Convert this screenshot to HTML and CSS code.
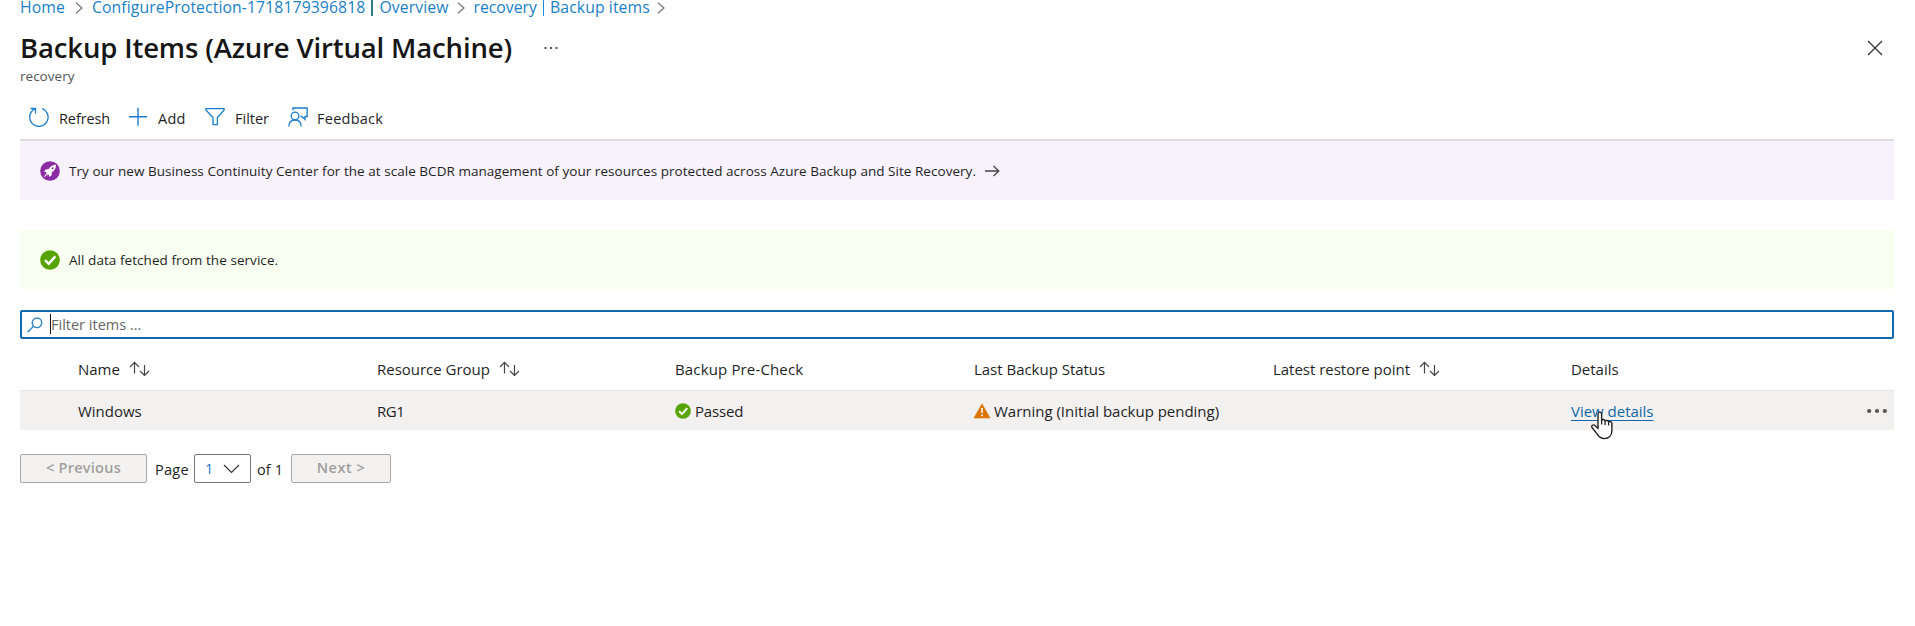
FILE: index.html
```html
<!DOCTYPE html>
<html lang="en">
<head>
<meta charset="utf-8">
<title>Backup Items (Azure Virtual Machine)</title>
<link rel="stylesheet" href="styles.css">
</head>
<body>
<svg class="defs" aria-hidden="true">
  <symbol id="chev" viewBox="0 0 8 12"><path d="M1 .8 7 6 1 11.2" fill="none" stroke="#777" stroke-width="1.2"/></symbol>
  <symbol id="sort" viewBox="0 0 21 16"><path d="M5.500 12.500V1.500M1 6l4.500-4.700L10 6M15.500 4v10M11 10l4.500 4.400L20 10" fill="none" stroke="#444" stroke-width="1.200"/></symbol>
  <symbol id="ok" viewBox="0 0 20 20"><circle cx="10" cy="10" r="9.8" fill="#57a300"/><path d="m5 10.2 3.7 3.6 6.6-7.5" fill="none" stroke="#fff" stroke-width="2.5"/></symbol>
</svg>

<nav class="breadcrumb">
  <a class="home">Home</a><svg class="chev"><use href="#chev"/></svg>
  <a class="config">ConfigureProtection-1718179396818</a><span class="bar dark"></span><a class="over">Overview</a><svg class="chev"><use href="#chev"/></svg>
  <a class="rec">recovery</a><span class="bar"></span><a class="items">Backup items</a><svg class="chev"><use href="#chev"/></svg>
</nav>

<header class="head">
  <h1>Backup Items (Azure Virtual Machine)</h1>
  <svg class="more" viewBox="0 0 14 4"><path d="M.5 1h2v2h-2zM6 1h2v2H6zM11.500 1h2v2h-2z" fill="#555"/></svg>
  <svg class="close" viewBox="0 0 16 16"><path d="m1 1 14 14M15 1 1 15" stroke="#333" stroke-width="1.3"/></svg>
</header>
<p class="subtitle">recovery</p>

<div class="toolbar">
  <button class="tool"><svg width="20" height="20" viewBox="0 0 20 20"><path d="M13.200 1.600A9.200 9.200 0 1 1 5.500 2.100M1.500 1.500h5v5" fill="none" stroke="#1b7cd0" stroke-width="1.3"/></svg><span class="t-refresh">Refresh</span></button>
  <button class="tool add"><svg width="18" height="20" viewBox="0 0 18 20"><path d="M9 .8v18M0 9.800h18" stroke="#1b7cd0" stroke-width="1.4"/></svg><span>Add</span></button>
  <button class="tool filter"><svg width="20" height="20" viewBox="0 0 20 20"><path d="M.9 1.700h18.200v1.200l-6.700 7.600v7.200H8v-7.200L.9 2.900z" fill="none" stroke="#1b7cd0" stroke-width="1.300"/></svg><span class="t-filter">Filter</span></button>
  <button class="tool feedback"><svg width="20" height="20" viewBox="0 0 20 20"><g fill="none" stroke="#1b7cd0" stroke-width="1.300"><circle cx="7" cy="9" r="3.800"/><path d="M.8 19.500c.2-4.200 2.700-6.500 6.200-6.500s6 2.300 6.200 6.500M5 3.600V1h14.200v8.500H17v3l-3-3h-1.500"/></g></svg><span>Feedback</span></button>
</div>

<section class="banner promo">
  <svg class="badge" viewBox="0 0 20 20"><circle cx="10" cy="10" r="9.800" fill="#8a2da5"/><path d="M16 3.800c-3.500.1-5.700 1.600-7.300 4.300l-2.900.3L4 10.800l2.500.3-.7 1.500 1.600 1.600 1.500-.7.3 2.500 2.400-1.800.3-2.900c2.700-1.600 4.100-3.900 4.100-7.500zM5.300 13.300 4 16l2.700-1.300z" fill="#fff"/><circle cx="12.600" cy="7.300" r="1" fill="#8a2da5"/></svg>
  <span>Try our new Business Continuity Center for the at scale BCDR management of your resources protected across Azure Backup and Site Recovery.</span>
  <svg class="arrow" viewBox="0 0 15 12"><path d="M0 6h14M8.500 1l5.300 5-5.300 5" fill="none" stroke="#444" stroke-width="1.300"/></svg>
</section>

<section class="banner success">
  <svg class="badge"><use href="#ok"/></svg>
  <span>All data fetched from the service.</span>
</section>

<div class="search">
  <svg class="lens" viewBox="0 0 16 16"><circle cx="10" cy="5.800" r="4.800" fill="none" stroke="#3183cf" stroke-width="1.300"/><path d="M6.500 9.300.6 15.200" stroke="#3183cf" stroke-width="1.400"/></svg>
  <span class="caret"></span><span class="placeholder">Filter items ...</span>
</div>

<div class="grid header">
  <div>Name<svg class="sort s1"><use href="#sort"/></svg></div>
  <div>Resource Group<svg class="sort"><use href="#sort"/></svg></div>
  <div class="wide">Backup Pre-Check</div>
  <div>Last Backup Status</div>
  <div>Latest restore point<svg class="sort"><use href="#sort"/></svg></div>
  <div>Details</div>
</div>
<div class="grid row">
  <div>Windows</div>
  <div class="rg">RG1</div>
  <div><svg class="state"><use href="#ok"/></svg><span class="passed">Passed</span></div>
  <div><svg class="state warn" viewBox="0 0 16 16"><path d="M8 .8 16 15H0z" fill="#db7500" stroke="#db7500" stroke-linejoin="round" stroke-width=".6"/><path d="M8 5v5M8 11.500v1.700" stroke="#fff" stroke-width="1.600"/></svg>Warning (Initial backup pending)</div>
  <div></div>
  <div class="last"><a class="view">View details<svg class="hand" viewBox="0 0 22 29"><path d="M7 15V3.200C7 .4 10.600.4 10.600 3.200V9.300c.7-1.200 3.200-1 3.500.7.800-1 3.200-.7 3.500.9 1-.8 3.300-.3 3.300 1.700v7c0 5-3.200 8-7.500 8-3.800 0-5.700-1.800-7.300-4.700L1 16.500c-1-2 1.200-3.300 2.700-2.200L7 17.500z" fill="#fff" stroke="#222" stroke-width="1.400" stroke-linejoin="round"/><path d="M10.600 9v4.500M14.100 10v4M17.600 11v3.500" stroke="#222" stroke-width="1.300"/></svg></a>
  <svg class="dots" viewBox="0 0 20 6"><g fill="#555"><circle cx="2.200" cy="3" r="2.100"/><circle cx="10" cy="3" r="2.100"/><circle cx="17.800" cy="3" r="2.100"/></g></svg></div>
</div>

<footer class="pager">
  <button class="prev" disabled>&lt; Previous</button>
  <span class="page">Page</span>
  <div class="select"><span>1</span><svg width="17" height="10" viewBox="0 0 17 10"><path d="m1 1 7.500 7.500L16 1" fill="none" stroke="#333" stroke-width="1.200"/></svg></div>
  <span class="of">of 1</span>
  <button class="next" disabled>Next &gt;</button>
</footer>
</body>
</html>
```
FILE: styles.css
```css
* { box-sizing: border-box; }
body {
  margin: 0;
  padding: 0 21px 0 20px;
  height: 626px;
  overflow: hidden;
  background: #fff;
  color: #1f1f1f;
  font: 14.5px/20px "Open Sans", "Noto Sans", sans-serif;
  letter-spacing: .25px;
  white-space: nowrap;
}
svg { flex: none; display: block; }
.defs { position: absolute; width: 0; height: 0; }
button { font: inherit; letter-spacing: inherit; color: inherit; }

.breadcrumb { display: flex; align-items: center; height: 14px; font-size: 15.75px; letter-spacing: .1px; color: #1a7fc8; }
.breadcrumb a { flex: none; }
.home { width: 55px; }
.config { width: 279px; }
.over { width: 77px; }
.rec { width: 69px; letter-spacing: 0; }
.items { width: 107px; }
.chev { width: 8px; height: 12px; margin: 2px 9px 0 0; }
.bar { width: 1.5px; height: 17px; margin-right: 7px; background: #1a8be0; }
.bar.dark { background: #2c7a86; }
.rec + .bar { margin-right: 6px; }

.head { display: flex; align-items: center; height: 51px; padding: 16px 11px 0 0; }
h1 { margin: 0; width: 524px; font-size: 27.5px; line-height: 35px; font-weight: 600; letter-spacing: -.15px; color: #161616; }
.more { width: 14px; height: 4px; }
.close { width: 16px; height: 16px; margin-left: auto; }
.subtitle { margin: 1px 0 0; font-size: 13.5px; letter-spacing: .02px; color: #555; }

.toolbar { display: flex; height: 55px; padding: 13px 0 1px 9px; border-bottom: 2px solid #dcdadd; }
.tool { display: flex; align-items: center; gap: 10px; width: 100px; padding: 0; border: 0; background: none; }
.tool svg { margin-top: -4px; }
.tool.add { width: 76px; gap: 11px; }
.tool.filter { width: 83px; }
.tool.feedback { gap: 9px; }
.t-refresh { letter-spacing: -.1px; }
.t-filter { letter-spacing: 0; }

.banner { display: flex; align-items: center; height: 59px; padding: 0 20px; font-size: 13.5px; letter-spacing: .04px; }
.promo { background: #f7f2fb; }
.success { margin-top: 30px; background: #f8fff0; letter-spacing: .06px; }
.badge { width: 20px; height: 20px; margin: 0 9px 0 0; }
.arrow { width: 15px; height: 12px; margin: 0 0 0 9px; }

.search { display: flex; align-items: center; height: 29px; margin-top: 21px; padding-left: 5px; border: 2px solid #0f68b0; border-radius: 2px; }
.lens { width: 16px; height: 16px; margin-right: 7px; }
.caret { width: 1px; height: 20px; margin-top: -2px; background: #111; }
.placeholder { color: #666; letter-spacing: 0; margin-top: 1px; }

.grid { display: grid; grid-template-columns: 299px 298px 299px 299px 298px 1fr; padding-left: 58px; align-items: center; font-size: 15px; letter-spacing: -.02px; }
.grid > div { display: flex; align-items: center; }
.header { height: 51px; padding-top: 9px; font-weight: 500; }
.grid > .wide { letter-spacing: .15px; }
.sort { width: 21px; height: 16px; margin-left: 9px; }
.row { height: 40px; padding-top: 1px; background: #f3f1ef; border-top: 1px solid #e5e3e1; }
.rg { letter-spacing: -.4px; }
.state { width: 16px; height: 16px; margin-right: 4px; }
.passed { letter-spacing: -.15px; }
.last { justify-content: space-between; padding-right: 7px; }
.view { position: relative; color: #0f66a8; text-decoration: underline; text-underline-offset: 3px; text-decoration-thickness: 1px; }
.hand { position: absolute; left: 20px; top: 10px; width: 22px; height: 29px; }
.dots { width: 20px; height: 6px; margin-top: -1px; }

.pager { display: flex; align-items: center; height: 29px; margin-top: 24px; }
.pager button { height: 29px; padding: 0 0 1px; border: 1.5px solid #aaa8a6; border-radius: 2px; background: #f3f2f1; color: #a19f9d; font-weight: 600; }
.prev { width: 127px; }
.page { width: 47px; padding-left: 8px; margin-top: 2px; }
.select { display: flex; align-items: center; justify-content: space-between; width: 57px; height: 29px; padding: 0 10px; border: 1px solid #777; border-radius: 2px; color: #1a78c8; }
.of { width: 40px; padding-left: 6px; margin-top: 2px; letter-spacing: .1px; }
.pager .next { width: 100px; letter-spacing: .5px; }
```
